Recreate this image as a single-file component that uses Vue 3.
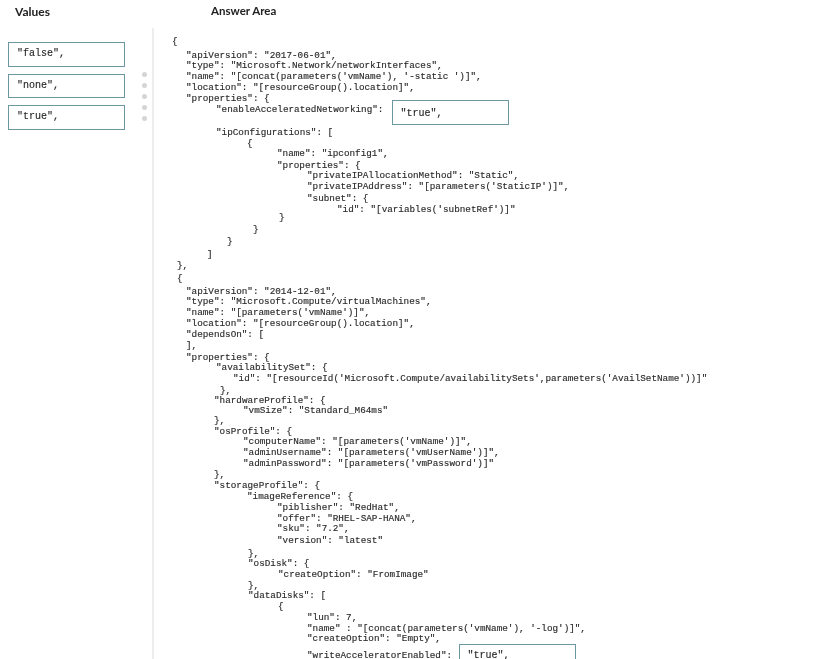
<script setup>
const raw = [
  [41, 172, '{'],
  [55, 186, '"apiVersion": "2017-06-01",'],
  [65, 186, '"type": "Microsoft.Network/networkInterfaces",'],
  [76, 186, '"name": "[concat(parameters(\'vmName\'), \'-static \')]",'],
  [87, 186, '"location": "[resourceGroup().location]",'],
  [98, 186, '"properties": {'],
  [109, 216, '"enableAcceleratedNetworking":', { gap: 9, w: 117, h: 25, top: -4.5, pad: 7.5, left: 7, text: '"true",' }],
  [132, 216, '"ipConfigurations": ['],
  [143, 247, '{'],
  [153, 277, '"name": "ipconfig1",'],
  [165, 277, '"properties": {'],
  [175, 307, '"privateIPAllocationMethod": "Static",'],
  [186, 307, '"privateIPAddress": "[parameters(\'StaticIP\')]",'],
  [198, 307, '"subnet": {'],
  [209, 337, '"id": "[variables(\'subnetRef\')]"'],
  [217, 279, '}'],
  [229, 253, '}'],
  [241, 227, '}'],
  [254, 207, ']'],
  [265, 177, '},'],
  [278, 177, '{'],
  [291, 186, '"apiVersion": "2014-12-01",'],
  [301, 186, '"type": "Microsoft.Compute/virtualMachines",'],
  [312, 186, '"name": "[parameters(\'vmName\')]",'],
  [323, 186, '"location": "[resourceGroup().location]",'],
  [334, 186, '"dependsOn": ['],
  [345, 186, '],'],
  [357, 186, '"properties": {'],
  [367, 216, '"availabilitySet": {'],
  [378, 233, '"id": "[resourceId(\'Microsoft.Compute/availabilitySets\',parameters(\'AvailSetName\'))]"'],
  [390, 220, '},'],
  [400, 214, '"hardwareProfile": {'],
  [410, 243, '"vmSize": "Standard_M64ms"'],
  [420, 214, '},'],
  [431, 214, '"osProfile": {'],
  [441, 243, '"computerName": "[parameters(\'vmName\')]",'],
  [452, 243, '"adminUsername": "[parameters(\'vmUserName\')]",'],
  [463, 243, '"adminPassword": "[parameters(\'vmPassword\')]"'],
  [474, 214, '},'],
  [485, 214, '"storageProfile": {'],
  [496, 247, '"imageReference": {'],
  [507, 277, '"piblisher": "RedHat",'],
  [518, 277, '"offer": "RHEL-SAP-HANA",'],
  [528, 277, '"sku": "7.2",'],
  [540, 277, '"version": "latest"'],
  [553, 248, '},'],
  [563, 248, '"osDisk": {'],
  [574, 278, '"createOption": "FromImage"'],
  [585, 248, '},'],
  [595, 248, '"dataDisks": ['],
  [606, 278, '{'],
  [617, 307, '"lun": 7,'],
  [628, 307, '"name" : "[concat(parameters(\'vmName\'), \'-log\')]",'],
  [638, 307, '"createOption": "Empty",'],
  [655, 307, '"writeAcceleratorEnabled":', { gap: 6.5, w: 117, h: 30, top: -6.5, pad: 5.5, left: 8, text: '"true",' }],
]

const lines = raw.map(([y, x, text, box], i) => ({
  text,
  box,
  style: {
    height: `${(raw[i + 1] ? raw[i + 1][0] : y + 11) - y}px`,
    paddingLeft: `${x - 160}px`,
  },
  boxStyle: box
    ? {
        width: `${box.w}px`,
        height: `${box.h}px`,
        marginLeft: `${box.gap}px`,
        marginTop: `${box.top}px`,
        paddingTop: `${box.pad}px`,
        paddingLeft: `${box.left}px`,
      }
    : null,
}))

const values = ['"false",', '"none",', '"true",']
const dots = [1, 2, 3, 4, 5]
</script>

<template>
  <div class="page">
    <aside class="values">
      <h2 class="values-title">Values</h2>
      <div class="value-list">
        <div v-for="v in values" :key="v" class="token">{{ v }}</div>
      </div>
    </aside>
    <div class="handle">
      <span v-for="d in dots" :key="d" class="dot"></span>
    </div>
    <main class="answer">
      <h2 class="answer-title">Answer Area</h2>
      <div class="code">
        <div v-for="(l, i) in lines" :key="i" class="line" :style="l.style">
          <span>{{ l.text }}</span>
          <span v-if="l.box" class="slot" :style="l.boxStyle">{{ l.box.text }}</span>
        </div>
      </div>
    </main>
  </div>
</template>

<style scoped>
.page {
  width: 826px;
  height: 659px;
  overflow: hidden;
  display: flex;
  background: #fff;
  color: #2b2b2b;
}
.values {
  width: 136px;
  flex: none;
  padding-left: 8px;
  box-sizing: border-box;
}
h2 {
  margin: 0;
  font: 700 12px/16px Lato, sans-serif;
  color: #222;
  filter: blur(0.3px);
}
.values-title {
  padding: 4px 0 0 7px;
}
.value-list {
  margin-top: 22px;
  display: flex;
  flex-direction: column;
  gap: 7px;
}
.token {
  width: 117px;
  height: 24.5px;
  box-sizing: border-box;
  border: 1px solid #6b989e;
  padding-left: 8px;
  font: 10px/22px "Liberation Mono", monospace;
  -webkit-text-stroke: 0.15px #2b2b2b;
  filter: blur(0.3px);
}
.handle {
  width: 18px;
  flex: none;
  margin-top: 28px;
  margin-right: 6px;
  padding-top: 43.5px;
  padding-left: 1px;
  box-sizing: border-box;
  border-right: 2px solid #ededed;
  display: flex;
  flex-direction: column;
  align-items: center;
  gap: 6.2px;
}
.dot {
  width: 5px;
  height: 5px;
  border-radius: 50%;
  background: #d4d6d6;
}
.answer {
  flex: 1;
  min-width: 0;
}
.answer-title {
  padding: 3px 0 0 51px;
  font-size: 11.5px;
}
.code {
  margin-top: 17.5px;
  font: 9.3px/9px "Liberation Mono", monospace;
  color: #2b2b2b;
  -webkit-text-stroke: 0.15px #2b2b2b;
  filter: blur(0.35px);
}
.line {
  display: flex;
  white-space: pre;
}
.slot {
  flex: none;
  box-sizing: border-box;
  border: 1px solid #6b989e;
  font-size: 10px;
}
</style>
